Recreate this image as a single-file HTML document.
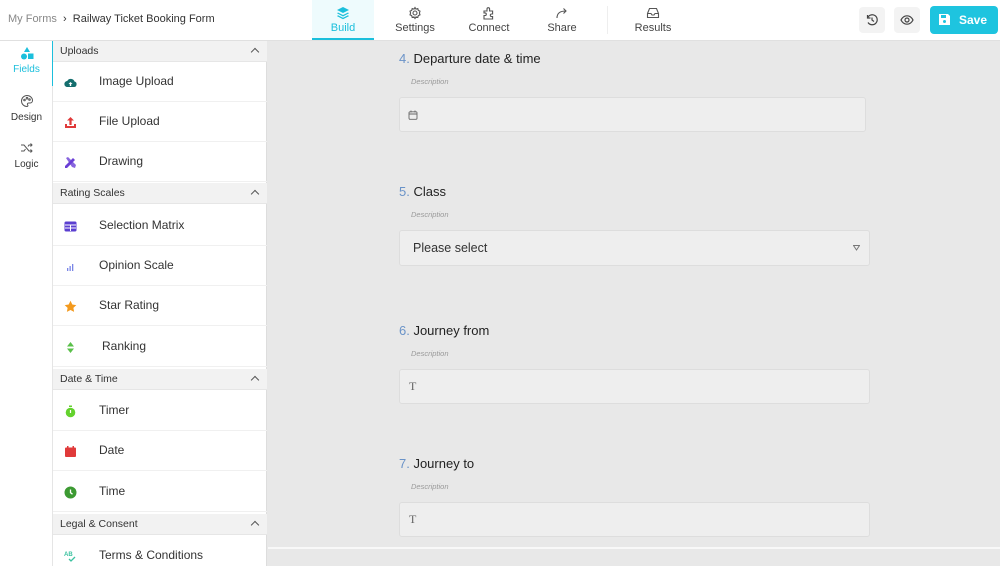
<!DOCTYPE html>
<html><head><meta charset="utf-8"><style>
*{box-sizing:border-box;margin:0;padding:0}
html,body{width:1000px;height:566px;overflow:hidden}
body{font-family:"Liberation Sans",sans-serif;background:#e8e8e8;position:relative;color:#333}
.hdr{position:absolute;left:0;top:0;width:1000px;height:41px;background:#fff;border-bottom:1px solid #e0e0e0}
.crumb{position:absolute;left:8px;top:13px;font-size:11px;color:#333}
.crumb span{color:#888}
.tab{position:absolute;top:0;height:40px;text-align:center;font-size:11px;color:#444}
.tab svg{display:block;margin:6px auto 2px}
.tab.act{background:#eefbfd;color:#1bbfdc;border-bottom:2px solid #1bbfdc}
.ib{position:absolute;top:7px;width:26px;height:26px;background:#f3f3f3;border-radius:4px}
.save{position:absolute;left:930px;top:6px;width:68px;height:28px;background:#1ec4df;border-radius:4px;color:#fff;font-weight:bold;font-size:12px}
.rail{position:absolute;left:0;top:41px;width:53px;height:525px;background:#fff;border-right:1px solid #e5e5e5}
.ri{position:absolute;left:0;width:53px;text-align:center;font-size:10px;color:#333}
.ri svg{display:block;margin:0 auto 4px}
.panel{position:absolute;left:53px;top:41px;width:214px;height:525px;background:#fff;border-right:1px solid #ddd}
.sh{position:absolute;left:0;width:214px;height:21px;background:#f2f2f2;font-size:10.5px;color:#333;padding:4px 7px;border-bottom:1px solid #e6e6e6}
.sh:after{content:"";position:absolute;right:9px;top:8px;width:5px;height:5px;border-left:1.2px solid #555;border-top:1.2px solid #555;transform:rotate(45deg)}
.it{position:absolute;left:0;width:214px;height:40px;border-bottom:1px solid #f0f0f0;font-size:12px;color:#333}
.it .t{position:absolute;left:46px;top:12px}
.it svg{position:absolute;left:11px;top:14px}
.q{position:absolute;left:399px;font-size:13px;color:#222}
.q b{font-weight:normal;color:#6a93c8}
.d{position:absolute;left:411px;font-size:7.5px;font-style:italic;color:#999}
.in{position:absolute;left:399px;background:#eee;border:1px solid #ddd;border-radius:3px}
</style></head><body>
<div class="hdr">
<div class="crumb"><span>My Forms</span> &nbsp;›&nbsp; Railway Ticket Booking Form</div>
<div class="tab act" style="left:312px;width:62px"><svg width="14" height="14" viewBox="0 0 14 14" fill="#1bbfdc"><path d="M7 1L13 4 7 7 1 4z"/><path d="M2 6.5L7 9l5-2.5 1 .8L7 10.5 1 7.3z"/><path d="M2 9.3L7 11.8l5-2.5 1 .8L7 13.3 1 10.1z"/></svg>Build</div>
<div class="tab" style="left:385px;width:60px"><svg width="14" height="14" viewBox="0 0 14 14" fill="none" stroke="#555" stroke-width="1.1"><circle cx="7" cy="7" r="2"/><path d="M7 1.5l1 1.6 1.8-.5.5 1.8 1.7.8-.6 1.8.6 1.8-1.7.8-.5 1.8-1.8-.5L7 12.5l-1-1.6-1.8.5-.5-1.8-1.7-.8.6-1.8-.6-1.8 1.7-.8.5-1.8 1.8.5z"/></svg>Settings</div>
<div class="tab" style="left:460px;width:58px"><svg width="14" height="14" viewBox="0 0 14 14" fill="none" stroke="#555" stroke-width="1.1"><path d="M2 5h3V3a1.3 1.3 0 012.6 0v2h3v3h-1a1.3 1.3 0 000 2.6h1V13H2V9.5h1a1.3 1.3 0 000-2.6H2z"/></svg>Connect</div>
<div class="tab" style="left:533px;width:58px"><svg width="14" height="14" viewBox="0 0 14 14" fill="none" stroke="#555" stroke-width="1.1"><path d="M2 12C2 7 5 5 11 5M8.5 2.5L11 5 8.5 7.5"/></svg>Share</div>
<div style="position:absolute;left:607px;top:6px;width:1px;height:28px;background:#eee"></div>
<div class="tab" style="left:623px;width:60px"><svg width="14" height="14" viewBox="0 0 14 14" fill="none" stroke="#555" stroke-width="1.1"><path d="M1.5 7.5l2-5h7l2 5v4h-11zM1.5 7.5h3.5l1 1.5h2l1-1.5h3.5"/></svg>Results</div>
<div class="ib" style="left:859px"><svg width="26" height="26" viewBox="0 0 26 26" fill="none" stroke="#444" stroke-width="1.2"><path d="M8.5 11a5 5 0 11.5 4.5M8.5 8v3h3M13 10.5V13l2 1.5"/></svg></div>
<div class="ib" style="left:894px"><svg width="26" height="26" viewBox="0 0 26 26" fill="none" stroke="#444" stroke-width="1.2"><path d="M7 13c1.5-3 3.5-4.2 6-4.2s4.5 1.2 6 4.2c-1.5 3-3.5 4.2-6 4.2S8.5 16 7 13z"/><circle cx="13" cy="13" r="2"/></svg></div>
<div class="save"><svg style="position:absolute;left:8px;top:7px" width="13" height="13" viewBox="0 0 13 13"><path d="M1 1h9l2 2v9H1z" fill="#fff"/><rect x="3" y="2" width="5" height="3" fill="#1ec4df"/><circle cx="6.5" cy="8.5" r="1.5" fill="#1ec4df"/></svg><span style="position:absolute;left:29px;top:7px">Save</span></div>
</div>
<div class="rail">
<div style="position:absolute;left:52px;top:0;width:2px;height:45px;background:#1bbfdc"></div>
<div class="ri" style="top:6px;color:#1bbfdc"><svg width="14" height="13" viewBox="0 0 14 13" fill="#1bbfdc"><path d="M7 0l3 5H4z"/><circle cx="4" cy="9.5" r="3"/><rect x="8" y="6.5" width="5.5" height="5.5"/></svg>Fields</div>
<div class="ri" style="top:53px"><svg width="14" height="14" viewBox="0 0 14 14" fill="none" stroke="#555" stroke-width="1"><path d="M7 1.5a5.5 5.5 0 100 11c1 0 1.2-1 .6-1.7-.6-.8 0-1.8 1-1.8h1.5a2.5 2.5 0 002.4-2.5C12.5 3.8 10 1.5 7 1.5z"/><circle cx="4.5" cy="6" r=".8"/><circle cx="7" cy="4.2" r=".8"/><circle cx="9.5" cy="5.5" r=".8"/></svg>Design</div>
<div class="ri" style="top:100px"><svg width="14" height="14" viewBox="0 0 14 14" fill="none" stroke="#555" stroke-width="1"><path d="M1 4h3l5 6h3M1 10h3l1.5-2M8 5.5L9 4h3M10.5 2.5L12 4l-1.5 1.5M10.5 8.5L12 10l-1.5 1.5"/></svg>Logic</div>
</div>
<div class="panel">
<div class="sh" style="top:0">Uploads</div>
<div class="it" style="top:21px"><svg width="13" height="13" viewBox="0 0 13 13"><path d="M3.5 11a3 3 0 01-.3-6A4 4 0 0110.5 5.5 2.8 2.8 0 0110 11z" fill="#146e6e"/><path d="M6.5 6l2 2h-1.3v2H5.8V8H4.5z" fill="#fff"/></svg><span class="t">Image Upload</span></div>
<div class="it" style="top:61px"><svg width="13" height="13" viewBox="0 0 13 13" fill="#e03a3a"><path d="M6.5 1L10 4.5H7.6V9H5.4V4.5H3z"/><path d="M1 8h2v2h7V8h2v4H1z"/></svg><span class="t">File Upload</span></div>
<div class="it" style="top:101px"><svg width="13" height="13" viewBox="0 0 13 13" fill="#6a3fd6"><path d="M1 10l8-8 2 2-8 8H1z"/><path d="M2 2l2-1 8 8-1 3-3-1z" opacity=".8"/></svg><span class="t">Drawing</span></div>
<div class="sh" style="top:142px">Rating Scales</div>
<div class="it" style="top:165px"><svg width="13" height="13" viewBox="0 0 13 13"><rect x="0.5" y="1.5" width="12" height="10" rx="1.5" fill="#5b3fd0"/><path d="M1 5h11M1 8h11M6.5 5v6" stroke="#fff" stroke-width="1"/></svg><span class="t">Selection Matrix</span></div>
<div class="it" style="top:205px"><svg width="13" height="13" viewBox="0 0 13 13" fill="#7a86e6"><rect x="3" y="8" width="1.3" height="3"/><rect x="5.5" y="6" width="1.3" height="5"/><rect x="8" y="4" width="1.3" height="7"/></svg><span class="t">Opinion Scale</span></div>
<div class="it" style="top:245px"><svg width="13" height="13" viewBox="0 0 13 13" fill="#f39a1e"><path d="M6.5 .8l1.8 3.7 4 .6-2.9 2.8.7 4-3.6-1.9-3.6 1.9.7-4L.7 5.1l4-.6z"/></svg><span class="t">Star Rating</span></div>
<div class="it" style="top:286px"><svg width="13" height="13" viewBox="0 0 13 13" fill="#5ac04a"><path d="M6.5 1L10 5.5H3zM6.5 12L3 7.5h7z"/></svg><span class="t" style="left:49px">Ranking</span></div>
<div class="sh" style="top:328px">Date &amp; Time</div>
<div class="it" style="top:350px"><svg width="13" height="13" viewBox="0 0 13 13" fill="#64d22e"><circle cx="6.5" cy="7.5" r="4.8"/><rect x="5" y="0.5" width="3" height="1.5"/><path d="M6.5 5v3" stroke="#fff" stroke-width="1.2"/></svg><span class="t">Timer</span></div>
<div class="it" style="top:390px"><svg width="13" height="13" viewBox="0 0 13 13" fill="#e03a3a"><rect x="1" y="2.5" width="11" height="9.5" rx="1"/><rect x="3" y="1" width="1.5" height="3"/><rect x="8.5" y="1" width="1.5" height="3"/></svg><span class="t">Date</span></div>
<div class="it" style="top:431px"><svg width="13" height="13" viewBox="0 0 13 13"><circle cx="6.5" cy="6.5" r="6" fill="#3c9a32"/><path d="M6.5 3.5v3.2l2 1.5" stroke="#fff" stroke-width="1.3" fill="none"/></svg><span class="t">Time</span></div>
<div class="sh" style="top:473px">Legal &amp; Consent</div>
<div class="it" style="top:495px"><svg width="14" height="13" viewBox="0 0 14 13"><text x="0" y="6" font-size="6" font-weight="bold" fill="#3cc2a0" font-family="Liberation Sans">AB</text><path d="M5 9l2 2 4-4" stroke="#3cc2a0" stroke-width="1.3" fill="none"/></svg><span class="t">Terms &amp; Conditions</span></div>
</div>

<div class="q" style="top:51px"><b>4.</b> Departure date &amp; time</div>
<div class="d" style="top:77px">Description</div>
<div class="in" style="top:97px;width:467px;height:35px"><svg style="position:absolute;left:8px;top:12px" width="10" height="10" viewBox="0 0 10 10" fill="none" stroke="#666" stroke-width=".9"><rect x="1" y="1.8" width="8" height="7.5" rx="1"/><path d="M1 4h8M3 .5v2M7 .5v2"/></svg></div>

<div class="q" style="top:184px"><b>5.</b> Class</div>
<div class="d" style="top:210px">Description</div>
<div class="in" style="top:230px;width:471px;height:36px"><span style="position:absolute;left:13px;top:10px;font-size:12.5px;color:#333">Please select</span><svg style="position:absolute;right:9px;top:14px" width="7" height="6" viewBox="0 0 7 6"><path d="M.5 .5h6L3.5 5z" fill="none" stroke="#777"/></svg></div>

<div class="q" style="top:323px"><b>6.</b> Journey from</div>
<div class="d" style="top:349px">Description</div>
<div class="in" style="top:369px;width:471px;height:35px"><span style="position:absolute;left:9px;top:9px;font-family:'Liberation Serif',serif;font-size:12px;color:#666">T</span></div>

<div class="q" style="top:456px"><b>7.</b> Journey to</div>
<div class="d" style="top:482px">Description</div>
<div class="in" style="top:502px;width:471px;height:35px"><span style="position:absolute;left:9px;top:9px;font-family:'Liberation Serif',serif;font-size:12px;color:#666">T</span></div>

<div style="position:absolute;left:268px;top:547px;width:732px;height:2px;background:#f8f8f8"></div>
</body></html>
